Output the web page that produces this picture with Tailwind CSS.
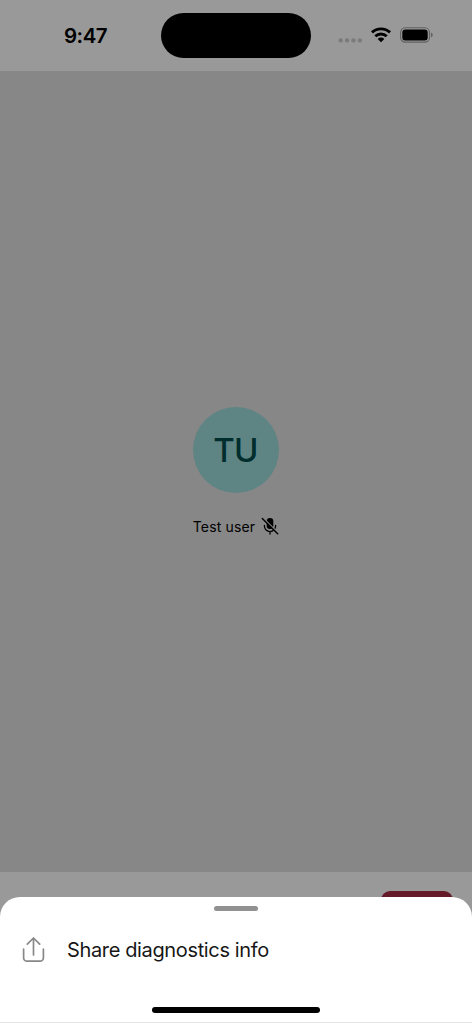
<!DOCTYPE html>
<html lang="en">
<head>
<meta charset="utf-8">
<meta name="viewport" content="width=device-width, initial-scale=1">
<title>Call</title>
<script src="https://cdn.jsdelivr.net/npm/@tailwindcss/browser@4"></script>
</head>
<body class="relative flex h-[1023px] w-[472px] flex-col overflow-hidden bg-[#999999] font-['Inter',sans-serif] text-black">
  <header class="flex h-[71px] shrink-0 items-start">
    <div class="w-[161px] pt-[23px] pl-[64px] text-[20.5px] leading-[25px] font-semibold tracking-[-0.5px] whitespace-nowrap">9:47</div>
    <div class="mt-[13px] h-[45px] w-[150px] rounded-full bg-black"></div>
    <svg class="mt-[37px] ml-[27px] h-[6px] w-[25px]" viewBox="0 0 25 6" fill="#7b7b7b"><circle cx="2.7" cy="3.4" r="2.2"/><circle cx="9.1" cy="3.4" r="2.2"/><circle cx="15.5" cy="3.4" r="2.2"/><circle cx="21.9" cy="3.4" r="2.2"/></svg>
    <svg class="mt-[27px] ml-[8px] h-[16px] w-[20px]" viewBox="0 0 20 16" fill="none" stroke="#000" stroke-width="2.9"><path d="M1 5.400a13.200 13.200 0 0 1 18 0"/><path d="M4.300 9.200a8.300 8.300 0 0 1 11.400 0"/><path d="M10 15.200 6.700 11.900a4.700 4.700 0 0 1 6.600 0z" fill="#000" stroke="none"/></svg>
    <svg class="mt-[27px] ml-[9px] h-[16px] w-[34px]" viewBox="0 0 34 16"><rect x=".6" y=".7" width="28.9" height="14.4" rx="4.600" fill="none" stroke="#626262" stroke-width="1.1"/><rect x="2.300" y="2.400" width="25.400" height="11" rx="3" fill="#000"/><path d="M31 5.500c2.300.8 2.300 4 0 4.800z" fill="#626262"/></svg>
  </header>
  <main class="flex h-[801px] shrink-0 flex-col items-center bg-[#878787] pt-[335.5px]">
    <div class="flex size-[86.5px] items-center justify-center rounded-full bg-[#5f8484] pt-[1px] pr-[1px] text-[33px] leading-none font-medium tracking-[-0.8px] text-[#002d2d]">TU</div>
    <div class="mt-[22px] flex h-[22px] items-center gap-[6px]">
      <span class="pt-[2px] text-[14px] leading-[20px] tracking-[0.15px] whitespace-nowrap">Test user</span>
      <svg class="h-[18px] w-[18px]" viewBox="0 0 18 18" fill="none" stroke="#000" stroke-linecap="round"><rect x="5.700" y="1" width="6.600" height="11" rx="3.300" fill="#000" stroke="none"/><path d="M3.400 8.500v.5a5.600 5.600 0 0 0 11.200 0v-.5M9 14.600V17" stroke-width="1.300"/><path d="m2.200.9 15.300 15.300" stroke="#878787" stroke-width="1.400"/><path d="m1.300 1.400 15.400 15.400" stroke-width="1.400"/></svg>
    </div>
  </main>
  <footer class="flex h-[151px] shrink-0 justify-end pt-[19px] pr-[19px]">
    <div class="h-[44px] w-[72px] rounded-[9px] bg-[#641b27]"></div>
  </footer>
  <section class="absolute inset-x-0 bottom-0 flex h-[126px] flex-col items-center rounded-t-[20px] border-b border-[#e3e3e3] bg-white">
    <div class="mt-[9px] h-[5px] w-[44px] shrink-0 rounded-full bg-[#919191]"></div>
    <div class="mt-[22px] flex h-[34px] w-full shrink-0 items-center pl-[21px]">
      <svg class="h-[28px] w-[24px] shrink-0" viewBox="0 0 24 28" fill="none" stroke="#888888" stroke-width="1.700" stroke-linecap="round" stroke-linejoin="round"><path d="M2.600 13.200v8.600a3.400 3.400 0 0 0 3.400 3.400h13a3.400 3.400 0 0 0 3.400-3.400v-8.600M12.500 19V2.400M6.300 8.200l6.200-6.200 6.200 6.200"/></svg>
      <span class="ml-[22px] text-[20px] leading-[26px] tracking-[-0.36px] whitespace-nowrap text-[#171717]">Share diagnostics info</span>
    </div>
    <div class="mt-[40px] h-[6px] w-[168px] shrink-0 rounded-full bg-black"></div>
  </section>
</body>
</html>
